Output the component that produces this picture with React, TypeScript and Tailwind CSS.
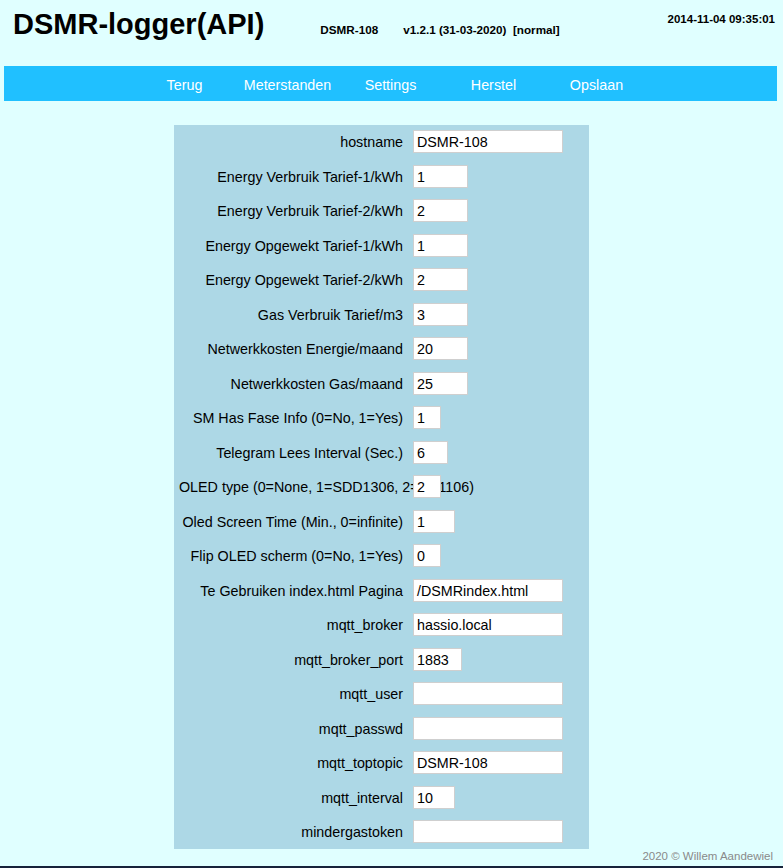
import React from "react";

const rows: { label: string; value: string; w: number }[] = [
  { label: "hostname", value: "DSMR-108", w: 150 },
  { label: "Energy Verbruik Tarief-1/kWh", value: "1", w: 55 },
  { label: "Energy Verbruik Tarief-2/kWh", value: "2", w: 55 },
  { label: "Energy Opgewekt Tarief-1/kWh", value: "1", w: 55 },
  { label: "Energy Opgewekt Tarief-2/kWh", value: "2", w: 55 },
  { label: "Gas Verbruik Tarief/m3", value: "3", w: 55 },
  { label: "Netwerkkosten Energie/maand", value: "20", w: 55 },
  { label: "Netwerkkosten Gas/maand", value: "25", w: 55 },
  { label: "SM Has Fase Info (0=No, 1=Yes)", value: "1", w: 28 },
  { label: "Telegram Lees Interval (Sec.)", value: "6", w: 35 },
  { label: "OLED type (0=None, 1=SDD1306, 2=SH1106)", value: "2", w: 28 },
  { label: "Oled Screen Time (Min., 0=infinite)", value: "1", w: 42 },
  { label: "Flip OLED scherm (0=No, 1=Yes)", value: "0", w: 28 },
  { label: "Te Gebruiken index.html Pagina", value: "/DSMRindex.html", w: 150 },
  { label: "mqtt_broker", value: "hassio.local", w: 150 },
  { label: "mqtt_broker_port", value: "1883", w: 49 },
  { label: "mqtt_user", value: "", w: 150 },
  { label: "mqtt_passwd", value: "", w: 150 },
  { label: "mqtt_toptopic", value: "DSMR-108", w: 150 },
  { label: "mqtt_interval", value: "10", w: 42 },
  { label: "mindergastoken", value: "", w: 150 },
];

const nav = ["Terug", "Meterstanden", "Settings", "Herstel", "Opslaan"];

export default function App() {
  return (
    <div
      className="w-[783px] h-[868px] bg-[#e0ffff] flex flex-col text-black overflow-hidden"
      style={{ fontFamily: '"Liberation Sans", Arial, Helvetica, sans-serif' }}
    >
      {/* header */}
      <div className="h-[66px] flex items-start relative">
        <div className="pl-[13px] pt-[7px] text-[29px] font-bold leading-[34px]">DSMR-logger(API)</div>
        <div className="ml-[56px] pt-[23px] flex text-[11.7px] font-bold leading-[14px]">
          <span>DSMR-108</span>
          <span className="ml-[25px]">v1.2.1 (31-03-2020)&nbsp;&nbsp;[normal]</span>
        </div>
        <div className="ml-auto pr-[8px] pt-[12px] text-[11.5px] font-bold leading-[14px]">2014-11-04 09:35:01</div>
      </div>

      {/* nav */}
      <div className="ml-[4px] w-[773px] h-[35px] bg-[#20c0ff] flex justify-center items-center">
        {nav.map((n) => (
          <div key={n} className="w-[103px] text-center text-white text-[14.3px] leading-[16px] pt-[4px]">
            {n}
          </div>
        ))}
      </div>

      {/* form */}
      <div className="mt-[24px] ml-[174px] w-[415px] bg-[#add8e6] flex flex-col">
        {rows.map((r) => (
          <div key={r.label} className="h-[34.5px] flex items-center pl-[5px]">
            <div className="w-[224px] shrink-0 text-right whitespace-nowrap text-[14.3px] leading-[16px] pt-[1px]">
              {r.label}
            </div>
            <div
              className="ml-[10px] h-[23px] bg-white border border-[#cfcfcf] pl-[3px] pt-[1px] text-[14.3px] leading-[21px] whitespace-nowrap overflow-hidden"
              style={{ width: r.w }}
            >
              {r.value}
            </div>
          </div>
        ))}
      </div>

      <div className="flex-1" />
      <div className="text-right pr-[10px] text-[11.5px] leading-[14px] text-[#8a8a8a] pb-[3px]">
        2020 © Willem Aandewiel
      </div>
      <div className="h-[2px] bg-[#17233b]" />
    </div>
  );
}
